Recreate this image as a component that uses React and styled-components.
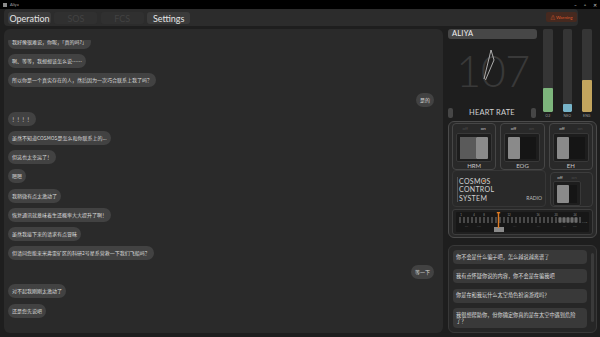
import styled, { createGlobalStyle } from 'styled-components';

const GlobalStyle = createGlobalStyle`
  html, body {
    margin: 0;
    padding: 0;
    background: #1e1e1e;
  }
  body {
    font-family: Lato, "Noto Sans", "Noto Sans CJK SC", sans-serif;
    color: #ddd;
  }
  * { box-sizing: border-box; }
`;

const Window = styled.div`
  width: 600px;
  height: 337px;
  overflow: hidden;
  display: flex;
  flex-direction: column;
  background: #1e1e1e;
`;

const TitleBar = styled.div`
  flex: none;
  height: 9px;
  background: #000;
  display: flex;
  align-items: center;
  padding: 0 3px;
  font-size: 4px;
  color: #aaa;
`;
const AppIcon = styled.span`
  width: 4px;
  height: 4px;
  margin-right: 3px;
  background: #8a8a8a;
`;
const WinControls = styled.div`
  margin-left: auto;
  display: flex;
  gap: 7px;
  font-size: 5px;
  color: #c8c8c8;
`;

const TabBar = styled.nav`
  flex: none;
  height: 17px;
  margin: 0 22px 0 4px;
  padding: 3px 1px 0 4px;
  background: #2c2c2c;
  border-radius: 4px;
  display: flex;
  align-items: flex-start;
  gap: 3.4px;
`;
const Tab = styled.div`
  width: 43px;
  height: 12px;
  border-radius: 3px;
  display: flex;
  align-items: center;
  justify-content: center;
  font-size: 9px;
  background: ${p => (p.$disabled ? '#303030' : '#3b3b3b')};
  color: ${p => (p.$disabled ? '#424242' : '#e4e4e4')};
`;
const WarningButton = styled.div`
  margin-left: auto;
  width: 31px;
  height: 10px;
  border-radius: 2px;
  background: #46291f;
  color: #dc5a2c;
  font-size: 4.5px;
  display: flex;
  align-items: center;
  justify-content: center;
  gap: 1px;
`;

const Main = styled.main`
  flex: 1;
  min-height: 0;
  display: grid;
  grid-template-columns: 439px 149px;
  column-gap: 5px;
  padding: 3px 3px 4px 4px;
`;

/* ---------- chat ---------- */

const ChatPanel = styled.section`
  background: #2a2a2a;
  border-radius: 6px;
  padding: 11px 9px 0 4px;
  overflow: hidden;
  display: flex;
  flex-direction: column;
`;
const ChatViewport = styled.div`
  flex: 1;
  overflow: hidden;
`;
const MessageList = styled.div`
  margin-top: -5px;
  display: flex;
  flex-direction: column;
  gap: 5.2px;
`;
const Bubble = styled.div`
  align-self: ${p => (p.$mine ? 'flex-end' : 'flex-start')};
  height: 14px;
  line-height: 14px;
  padding: 0 4px;
  border-radius: 7px;
  background: #424242;
  color: #dadada;
  font-size: 5px;
  white-space: nowrap;
  font-family: "Noto Sans CJK SC", "Noto Sans", sans-serif;
`;

/* ---------- right column ---------- */

const RightColumn = styled.aside`
  display: flex;
  flex-direction: column;
  min-height: 0;
`;

const Monitor = styled.div`
  flex: none;
  height: 89px;
  display: grid;
  grid-template-columns: 90px 1fr;
  column-gap: 5px;
`;
const HeartColumn = styled.div`
  display: flex;
  flex-direction: column;
`;
const NameBar = styled.div`
  height: 10px;
  width: 89px;
  border-radius: 3px;
  background: #474747;
  color: #f0f0f0;
  font-size: 7.5px;
  line-height: 10px;
  padding-left: 4px;
  letter-spacing: 0.2px;
`;
const HeartDisplay = styled.div`
  position: relative;
  flex: 1;
  padding-top: 9.5px;
  text-align: center;
`;
const HeartValue = styled.div`
  font-size: 43px;
  line-height: 43px;
  font-weight: 300;
  letter-spacing: -0.5px;
  color: #393939;
`;
const PulseTrace = styled.svg`
  position: absolute;
  inset: 0;
  width: 100%;
  height: 100%;
`;
const HeartFooter = styled.div`
  height: 11px;
  display: flex;
  align-items: center;
  justify-content: space-between;
  padding-right: 2px;
`;
const Pill = styled.span`
  width: 5px;
  height: 10px;
  border-radius: 2px;
  background: #464646;
`;
const HeartLabel = styled.span`
  font-size: 7.5px;
  color: #d2d2d2;
  letter-spacing: 0.2px;
`;

const Gauges = styled.div`
  display: grid;
  grid-template-columns: repeat(3, 9.5px);
  column-gap: 10px;
`;
const Gauge = styled.div`
  display: flex;
  flex-direction: column;
  align-items: center;
`;
const GaugeTrack = styled.div`
  width: 100%;
  height: 83px;
  border-radius: 1.5px;
  background: #353535;
  display: flex;
  flex-direction: column-reverse;
  overflow: hidden;
`;
const GaugeFill = styled.div`
  height: ${p => p.$level}px;
  background: ${p => p.$color};
  border-radius: 1px;
`;
const GaugeLabel = styled.span`
  margin-top: 1.5px;
  font-size: 3.5px;
  color: #9a9a9a;
`;

/* ---------- control panel ---------- */

const ControlPanel = styled.section`
  flex: none;
  height: 117px;
  margin-top: 3px;
  border: 1px solid #4b4b4b;
  border-radius: 6px;
  background: #292929;
  padding: 1px 3px 2px;
  display: flex;
  flex-direction: column;
`;
const SwitchRow = styled.div`
  height: 44px;
  display: grid;
  grid-template-columns: repeat(3, 1fr);
  column-gap: 4px;
`;
const SwitchBox = styled.div`
  border: 1px solid #464646;
  border-radius: 4px;
  display: flex;
  flex-direction: column;
  align-items: center;
`;
const OnOff = styled.div`
  width: ${p => p.$width}px;
  height: 9px;
  display: flex;
  justify-content: space-around;
  align-items: center;
  font-size: 4.5px;
`;
const OnOffText = styled.span`
  color: ${p => (p.$active ? '#c4c4c4' : '#4c4c4c')};
`;
const Housing = styled.div`
  width: ${p => p.$width}px;
  height: ${p => p.$height}px;
  padding: 2.5px 3px;
  border-radius: 2px;
  background: #1d1d1d;
  border: 1px solid #383838;
  display: flex;
  flex-direction: ${p => (p.$on ? 'row' : 'row-reverse')};
`;
const SwitchTrack = styled.div`
  flex: 1;
  background: ${p => (p.$on ? '#5a5a5a' : '#151515')};
`;
const Knob = styled.div`
  width: 12px;
  background: #8a8a8a;
  border-radius: 1px;
`;
const Caption = styled.span`
  margin-top: 1px;
  padding: 0 2px;
  font-size: 6px;
  line-height: 6px;
  color: #c8c8c8;
  background: #292929;
`;

const LowerRow = styled.div`
  height: 37px;
  margin-top: 3px;
  display: flex;
  gap: 4px;
`;
const CosmosBox = styled.div`
  flex: 1;
  border: 1px solid #363636;
  border-radius: 4px;
  padding: 5px 3px 4px 4px;
  display: flex;
  align-items: flex-end;
  justify-content: space-between;
`;
const CosmosTitle = styled.div`
  border-left: 1px solid #565656;
  padding-left: 1px;
  font-size: 7px;
  line-height: 8.5px;
  color: #d2d2d2;
  letter-spacing: 0.3px;
`;
const Dotted = styled.span`
  position: relative;
  &::after {
    content: '';
    position: absolute;
    left: 50%;
    top: 50%;
    width: 2px;
    height: 2px;
    margin: -0.5px 0 0 -1px;
    border-radius: 50%;
    background: #e2762a;
  }
`;
const RadioLabel = styled.span`
  font-size: 5px;
  line-height: 7px;
  color: #bdbdbd;
`;
const RadioBox = styled.div`
  width: 43px;
  margin-top: 2px;
  border: 1px solid #3c3c3c;
  border-radius: 4px;
  padding-left: 2px;
  display: flex;
  flex-direction: column;
  align-items: flex-start;
`;

const Tuner = styled.div`
  height: 26px;
  margin-top: 2px;
  border: 1px solid #3d3d3d;
  border-radius: 3px;
  background: #202020;
  overflow: hidden;
`;
const TunerScale = styled.svg`
  display: block;
  width: 100%;
  height: 100%;
`;

/* ---------- responses ---------- */

const ResponsePanel = styled.section`
  flex: 1;
  min-height: 0;
  margin-top: 7px;
  border: 1px solid #383838;
  border-radius: 6px;
  background: #262626;
  padding: 4px 2px 4px 4px;
  display: flex;
  gap: 4px;
  overflow: hidden;
`;
const OptionList = styled.div`
  flex: 1;
  display: flex;
  flex-direction: column;
  gap: 5.3px;
`;
const Option = styled.div`
  padding: 3.75px 6px 3.75px 3px;
  border-radius: 4px;
  background: #393939;
  color: #dcdcdc;
  font-size: 5.2px;
  line-height: 6.5px;
  font-family: "Noto Sans CJK SC", "Noto Sans", sans-serif;
`;
const Scrollbar = styled.div`
  flex: none;
  width: 3px;
  height: 69px;
  margin-top: 3px;
  border-radius: 1.5px;
  background: #3a3a3a;
`;

const messages = [
  { text: '我好像很难说，你呢，「真的吗?」' },
  { text: '啊、等等，我想想该怎么说……' },
  { text: '所以你是一个真实存在的人，然后因为一次巧合联系上我了吗？' },
  { text: '是的', mine: true },
  { text: '！！！！' },
  { text: '虽然不知道COSMOS是怎么和你联系上的...' },
  { text: '但这也太幸运了！' },
  { text: '嗯嗯' },
  { text: '我稍微有点太激动了' },
  { text: '恢复通讯就意味着生还概率大大提升了啊！' },
  { text: '虽然我接下来的请求有点冒昧' },
  { text: '但请问您能来米弗雷矿区的科研2号星系营救一下我们飞船吗？' },
  { text: '等一下', mine: true },
  { text: '对不起我刚刚太激动了' },
  { text: '还是您先说吧' },
];

const responses = [
  '你不会是什么骗子吧，怎么越说越离谱了',
  '我有点怀疑你说的内容，你不会是在骗我吧',
  '你是在和我玩什么太空角色扮演游戏吗？',
  '我很想帮助你，但你确定你真的是在太空中遇到危险了？',
];

const gauges = [
  { label: 'O2', level: 24, color: '#7db57c' },
  { label: 'NEO', level: 8, color: '#77b4c9' },
  { label: 'ENG', level: 32, color: '#c3a55e' },
];

const switches = [
  { label: 'HRM', on: true },
  { label: 'EOG', on: false },
  { label: 'EH', on: false },
];

const Toggle = ({ on, width, height }) => (
  <>
    <OnOff $width={width}>
      <OnOffText $active={!on}>off</OnOffText>
      <OnOffText $active={on}>on</OnOffText>
    </OnOff>
    <Housing $on={on} $width={width} $height={height}>
      <SwitchTrack $on={on} />
      <Knob />
    </Housing>
  </>
);

const scaleTicks = Array.from({ length: 31 }, (_, i) => 7 + i * 4);
const denseTicks = Array.from({ length: 10 }, (_, i) => 105 + i * 2);
const scaleNumbers = [
  [8, '1'], [21, '4'], [31, '8'], [56, '12'], [85, '16'], [103, '20'], [122, '24'],
];

const TunerDrawing = () => (
  <TunerScale viewBox="0 0 139 24" preserveAspectRatio="none">
    <rect x="3" y="2" width="133" height="20" rx="1" fill="#171717" />
    {scaleNumbers.map(([x, n]) => (
      <text key={n} x={x} y="5.6" fontSize="2.8" fill="#8a8a8a" textAnchor="middle"
        fontFamily="Lato, sans-serif">{n}</text>
    ))}
    {scaleTicks.map(x => (
      <line key={x} x1={x} x2={x} y1="7" y2="13" stroke="#bdbdbd" strokeWidth="0.6" />
    ))}
    {denseTicks.map(x => (
      <line key={`d${x}`} x1={x + 1} x2={x + 1} y1="7.5" y2="12.5" stroke="#d8d8d8" strokeWidth="0.5" />
    ))}
    <text x="129" y="12.5" fontSize="2.4" fill="#777" fontFamily="Lato, sans-serif">MHz</text>
    {[[12, 'SW'], [24, 'MW'], [60, 'AM'], [84, 'FM'], [110, 'LW'], [120, 'SSB']].map(([x, t]) => (
      <text key={t} x={x} y="16.8" fontSize="2" fill="#505050" fontFamily="Lato, sans-serif">{t}</text>
    ))}
    <rect x="41" y="17" width="10" height="5" fill="#8a8a8a" />
    <line x1="45.5" x2="45.5" y1="2.5" y2="18" stroke="#e07b22" strokeWidth="1.4" />
    <rect x="43.8" y="2" width="3.4" height="1.4" fill="#e07b22" />
  </TunerScale>
);

const App = () => (
  <Window>
    <GlobalStyle />
    <TitleBar>
      <AppIcon />
      <span>Aliya</span>
      <WinControls>
        <span>–</span>
        <span>▫</span>
        <span>✕</span>
      </WinControls>
    </TitleBar>

    <TabBar>
      <Tab>Operation</Tab>
      <Tab $disabled>SOS</Tab>
      <Tab $disabled>FCS</Tab>
      <Tab>Settings</Tab>
      <WarningButton>
        <span>⚠</span>
        <span>Warning</span>
      </WarningButton>
    </TabBar>

    <Main>
      <ChatPanel>
        <ChatViewport>
          <MessageList>
            {messages.map((m, i) => (
              <Bubble key={i} $mine={m.mine}>{m.text}</Bubble>
            ))}
          </MessageList>
        </ChatViewport>
      </ChatPanel>

      <RightColumn>
        <Monitor>
          <HeartColumn>
            <NameBar>ALIYA</NameBar>
            <HeartDisplay>
              <HeartValue>107</HeartValue>
              <PulseTrace viewBox="0 0 90 68">
                <polyline points="36,40 43,11 46,21 37.5,41" fill="none"
                  stroke="#e8e8e8" strokeWidth="0.7" strokeLinejoin="round" />
              </PulseTrace>
            </HeartDisplay>
            <HeartFooter>
              <Pill />
              <HeartLabel>HEART RATE</HeartLabel>
              <Pill />
            </HeartFooter>
          </HeartColumn>
          <Gauges>
            {gauges.map(g => (
              <Gauge key={g.label}>
                <GaugeTrack>
                  <GaugeFill $level={g.level} $color={g.color} />
                </GaugeTrack>
                <GaugeLabel>{g.label}</GaugeLabel>
              </Gauge>
            ))}
          </Gauges>
        </Monitor>

        <ControlPanel>
          <SwitchRow>
            {switches.map(s => (
              <SwitchBox key={s.label}>
                <Toggle on={s.on} width={36} height={29} />
                <Caption>{s.label}</Caption>
              </SwitchBox>
            ))}
          </SwitchRow>
          <LowerRow>
            <CosmosBox>
              <CosmosTitle>
                COSM<Dotted>O</Dotted>S<br />CONTROL<br />SYSTEM
              </CosmosTitle>
              <RadioLabel>RADIO</RadioLabel>
            </CosmosBox>
            <RadioBox>
              <Toggle on={false} width={28} height={27} />
            </RadioBox>
          </LowerRow>
          <Tuner>
            <TunerDrawing />
          </Tuner>
        </ControlPanel>

        <ResponsePanel>
          <OptionList>
            {responses.map(r => (
              <Option key={r}>{r}</Option>
            ))}
          </OptionList>
          <Scrollbar />
        </ResponsePanel>
      </RightColumn>
    </Main>
  </Window>
);

export default App;
